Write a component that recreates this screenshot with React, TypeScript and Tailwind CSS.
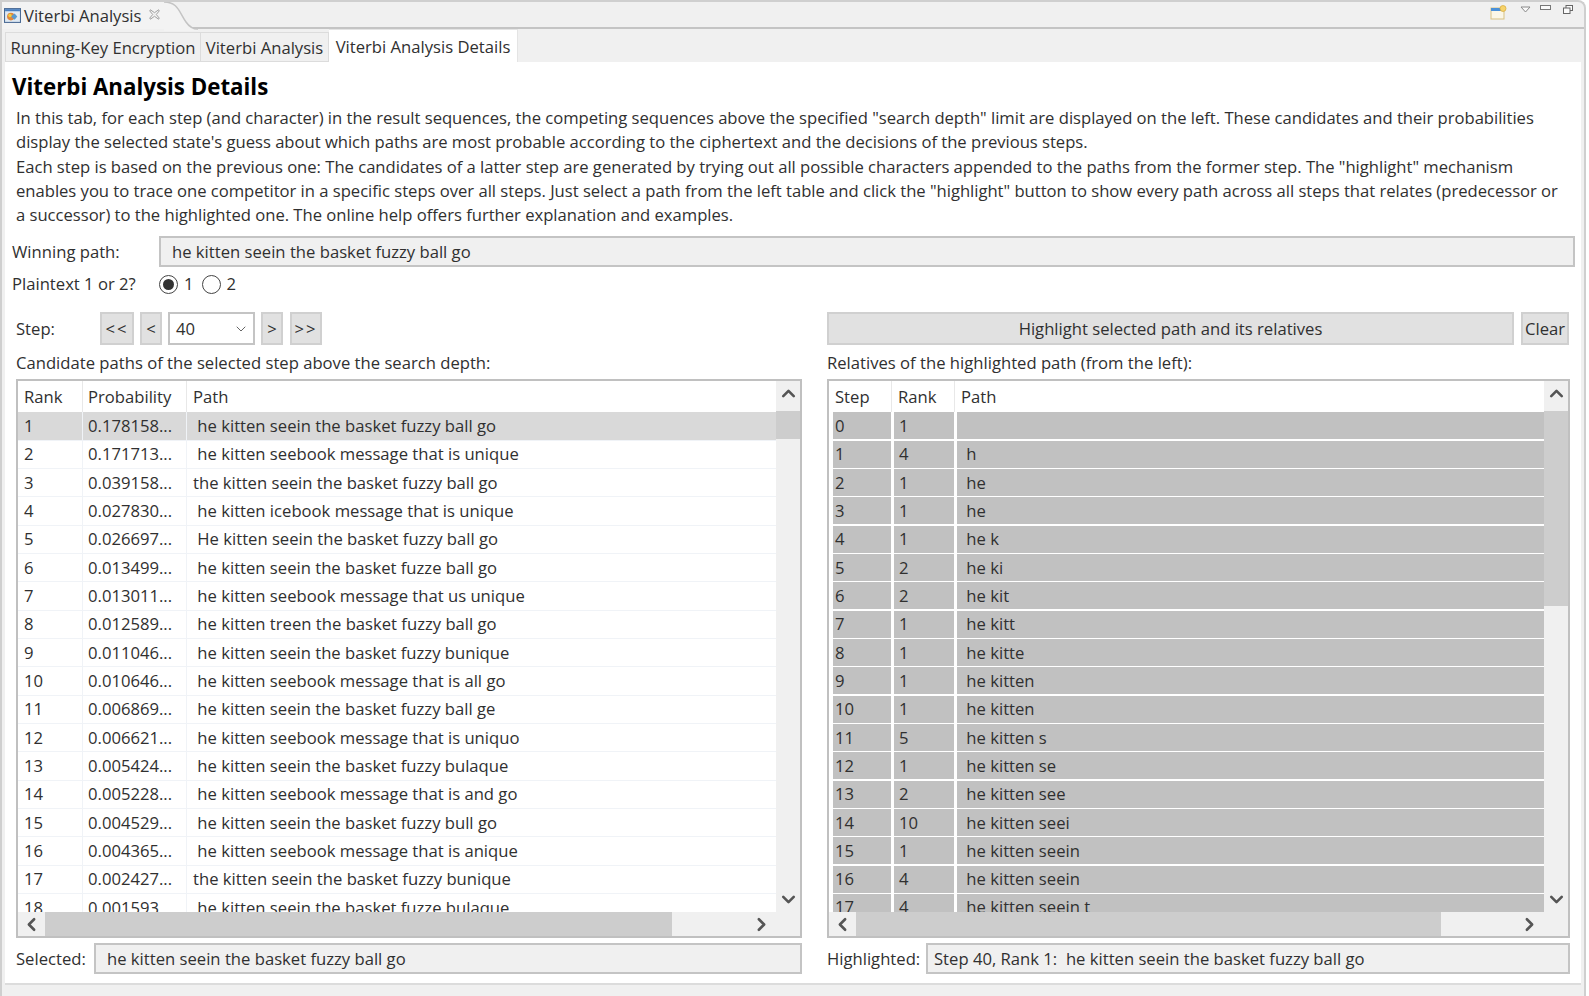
import React from "react";
import { ChevronUp, ChevronDown, ChevronLeft, ChevronRight } from "lucide-react";

const leftRows: [string, string, string][] = [
  ["1", "0.178158...", " he kitten seein the basket fuzzy ball go"],
  ["2", "0.171713...", " he kitten seebook message that is unique"],
  ["3", "0.039158...", "the kitten seein the basket fuzzy ball go"],
  ["4", "0.027830...", " he kitten icebook message that is unique"],
  ["5", "0.026697...", " He kitten seein the basket fuzzy ball go"],
  ["6", "0.013499...", " he kitten seein the basket fuzze ball go"],
  ["7", "0.013011...", " he kitten seebook message that us unique"],
  ["8", "0.012589...", " he kitten treen the basket fuzzy ball go"],
  ["9", "0.011046...", " he kitten seein the basket fuzzy bunique"],
  ["10", "0.010646...", " he kitten seebook message that is all go"],
  ["11", "0.006869...", " he kitten seein the basket fuzzy ball ge"],
  ["12", "0.006621...", " he kitten seebook message that is uniquo"],
  ["13", "0.005424...", " he kitten seein the basket fuzzy bulaque"],
  ["14", "0.005228...", " he kitten seebook message that is and go"],
  ["15", "0.004529...", " he kitten seein the basket fuzzy bull go"],
  ["16", "0.004365...", " he kitten seebook message that is anique"],
  ["17", "0.002427...", "the kitten seein the basket fuzzy bunique"],
  ["18", "0.001593...", " he kitten seein the basket fuzze bulaque"],
];

const rightRows: [string, string, string][] = [
  ["0", "1", ""],
  ["1", "4", " h"],
  ["2", "1", " he"],
  ["3", "1", " he"],
  ["4", "1", " he k"],
  ["5", "2", " he ki"],
  ["6", "2", " he kit"],
  ["7", "1", " he kitt"],
  ["8", "1", " he kitte"],
  ["9", "1", " he kitten"],
  ["10", "1", " he kitten"],
  ["11", "5", " he kitten s"],
  ["12", "1", " he kitten se"],
  ["13", "2", " he kitten see"],
  ["14", "10", " he kitten seei"],
  ["15", "1", " he kitten seein"],
  ["16", "4", " he kitten seein"],
  ["17", "4", " he kitten seein t"],
];

const paragraph = [
  'In this tab, for each step (and character) in the result sequences, the competing sequences above the specified "search depth" limit are displayed on the left. These candidates and their probabilities',
  "display the selected state's guess about which paths are most probable according to the ciphertext and the decisions of the previous steps.",
  'Each step is based on the previous one: The candidates of a latter step are generated by trying out all possible characters appended to the paths from the former step. The "highlight" mechanism',
  'enables you to trace one competitor in a specific steps over all steps. Just select a path from the left table and click the "highlight" button to show every path across all steps that relates (predecessor or',
  "a successor) to the highlighted one. The online help offers further explanation and examples.",
];

function Btn({ children, className }: { children: React.ReactNode; className: string }) {
  return (
    <div className={`flex items-center justify-center h-[33px] pt-[1px] bg-[#e1e1e1] border-2 border-[#d0d0d0] ${className}`}>
      {children}
    </div>
  );
}

function Chev({ Icon }: { Icon: typeof ChevronUp }) {
  return <Icon size={21} strokeWidth={3} className="text-[#555555]" />;
}

function VScroll({ thumb }: { thumb: string }) {
  return (
    <div className="w-[24px] shrink-0 bg-[#f0f0f0] flex flex-col items-center">
      <div className="h-[30px] shrink-0 w-full flex items-center justify-center pb-[5px]">
        <Chev Icon={ChevronUp} />
      </div>
      <div className={`w-full shrink-0 bg-[#cdcdcd] ${thumb}`} />
      <div className="flex-1" />
      <div className="h-[26px] shrink-0 flex items-center justify-center">
        <Chev Icon={ChevronDown} />
      </div>
    </div>
  );
}

function HScroll({ thumb }: { thumb: string }) {
  return (
    <div className="h-[24px] shrink-0 flex items-center bg-[#f0f0f0]">
      <div className="w-[27px] shrink-0 flex items-center justify-center">
        <Chev Icon={ChevronLeft} />
      </div>
      <div className={`h-full shrink-0 bg-[#cdcdcd] ${thumb}`} />
      <div className="flex-1 flex items-center justify-end pr-[28px]">
        <Chev Icon={ChevronRight} />
      </div>
    </div>
  );
}

function Field({ children, className }: { children: React.ReactNode; className: string }) {
  return (
    <div className={`flex items-center whitespace-pre pt-[2px] bg-[#f0f0f0] border-2 border-[#c4c4c4] ${className}`}>{children}</div>
  );
}

export default function App() {
  return (
    <div
      className="w-[1589px] h-[996px] bg-white overflow-hidden text-[#303030] text-[16.65px] whitespace-nowrap"
      style={{ fontFamily: '"Open Sans", "Noto Sans", sans-serif' }}
    >
      <div className="w-[1586px] h-[996px] bg-[#f0f0f0] border-l-2 border-r-2 border-t-2 border-[#cfcfcf] rounded-tr-[8px] flex flex-col">
        {/* view tab bar */}
        <div className="h-[27px] shrink-0 flex border-b-2 border-[#c4c4c4] relative">
          <div className="w-[162px] h-[27px] bg-[#f3f3f3] flex items-center pl-[2px] relative z-10">
            <svg width="17" height="17" viewBox="0 0 16 16" className="shrink-0">
              <rect x="0.5" y="1.5" width="15" height="13" fill="#dfe9f3" stroke="#4a6a94" />
              <rect x="1" y="2" width="14" height="2" fill="#4a7fc0" />
              <circle cx="6.5" cy="9" r="3.6" fill="#e0863c" />
              <path d="M6.5 9 L10 6 L12.5 9 L10 12 Z" fill="#5a9ad0" />
              <circle cx="5.6" cy="8" r="1.6" fill="#f0d040" />
            </svg>
            <span className="ml-[3px] pt-[2px]">Viterbi Analysis</span>
            <svg width="13" height="13" viewBox="0 0 11 11" className="ml-[7px] mb-[3px]">
              <path d="M2 1.5 L5.5 4 L9 1.5 L9.5 2.5 L7 5.5 L9.5 8.5 L9 9.5 L5.5 7 L2 9.5 L1.5 8.5 L4 5.5 L1.5 2.5 Z" fill="#f4f4f4" stroke="#9a9a9a" strokeWidth="0.8" />
            </svg>
          </div>
          <svg width="34" height="29" viewBox="0 0 34 29" className="shrink-0 relative z-10">
            <path d="M0 0 C 14 0, 15 10, 22 20 C 26 26, 30 27, 34 27 L 34 29 L 0 29 Z" fill="#f3f3f3" />
            <path d="M0 0 C 14 0, 15 10, 22 20 C 26 26, 30 27, 34 27" fill="none" stroke="#c4c4c4" strokeWidth="1.5" />
          </svg>
          <div className="flex-1 flex items-start justify-end">
            <svg width="17" height="16" viewBox="0 0 17 16" className="mt-[3px] mr-[13px]">
              <rect x="1" y="3" width="13" height="11" fill="#fbf7e8" stroke="#d7c183" />
              <rect x="1" y="3" width="13" height="3" fill="#4a90d9" />
              <circle cx="13" cy="3.5" r="3" fill="#f7d36b" stroke="#d4a93a" strokeWidth="0.7" />
            </svg>
            <svg width="11" height="7" viewBox="0 0 11 7" className="mt-[4px] mr-[9px]">
              <path d="M1 1 H10 L5.5 6 Z" fill="#fafafa" stroke="#8a8a8a" />
            </svg>
            <svg width="11" height="6" viewBox="0 0 11 6" className="mt-[3px] mr-[12px]">
              <rect x="0.5" y="0.5" width="10" height="4" fill="#fafafa" stroke="#777777" />
            </svg>
            <svg width="10" height="9" viewBox="0 0 10 9" className="mt-[3px] mr-[11px]">
              <rect x="3" y="0.5" width="6.5" height="5" fill="#fafafa" stroke="#666666" />
              <rect x="0.5" y="3" width="6.5" height="5.5" fill="#fafafa" stroke="#666666" />
            </svg>
          </div>
        </div>

        {/* inner tabs */}
        <div className="h-[33px] shrink-0 flex items-end pl-[3px] pr-[2px]">
          <div className="h-[30px] w-[196px] flex items-center justify-center pt-[3px] bg-[#f0f0f0] border border-[#dcdcdc]">Running-Key Encryption</div>
          <div className="h-[30px] w-[128px] flex items-center justify-center pt-[3px] bg-[#f0f0f0] border border-[#dcdcdc] border-l-0">Viterbi Analysis</div>
          <div className="h-[33px] w-[189px] flex items-center justify-center pt-[3px] bg-white border-t border-r border-[#e4e4e4]">Viterbi Analysis Details</div>
        </div>

        {/* tab body */}
        <div className="w-[1576px] ml-[3px] h-[923px] shrink-0 bg-white border-b-2 border-[#dcdcdc] flex flex-col">
          <div className="h-[37px] pt-[8px] pl-[7px] text-[22.3px] leading-[34px] font-bold text-black shrink-0">Viterbi Analysis Details</div>
          <div className="mt-[7px] pl-[11px] leading-[24.3px] tracking-[-0.025px] shrink-0">
            {paragraph.map((line) => (
              <div key={line}>{line}</div>
            ))}
          </div>

          <div className="mt-[9px] h-[31px] flex shrink-0 items-center pl-[7px]">
            <div className="w-[147px] pt-[2px]">Winning path:</div>
            <Field className="w-[1416px] h-[31px] pl-[11px]">he kitten seein the basket fuzzy ball go</Field>
          </div>

          <div className="h-[35px] flex shrink-0 items-center pl-[7px]">
            <div className="w-[147px]">Plaintext 1 or 2?</div>
            <div className="w-[19px] h-[19px] rounded-full border border-[#444444] flex items-center justify-center">
              <div className="w-[11px] h-[11px] rounded-full bg-[#333333]" />
            </div>
            <span className="ml-[6px]">1</span>
            <div className="ml-[8px] w-[19px] h-[19px] rounded-full border border-[#444444]" />
            <span className="ml-[6px]">2</span>
          </div>

          <div className="mt-[10px] h-[33px] flex shrink-0 pl-[11px]">
            <div className="w-[584px] flex">
              <div className="w-[84px] flex items-center pt-[1px]">Step:</div>
              <Btn className="w-[34px] tracking-[2px]">&lt;&lt;</Btn>
              <Btn className="w-[22px] ml-[6px]">&lt;</Btn>
              <div className="w-[87px] ml-[6px] h-[33px] border-2 border-[#c4c4c4] flex items-center justify-between pl-[6px] pr-[4px]">
                <span className="pt-[1px]">40</span>
                <ChevronDown size={16} strokeWidth={1.5} className="text-[#666666]" />
              </div>
              <Btn className="w-[22px] ml-[6px]">&gt;</Btn>
              <Btn className="w-[32px] ml-[7px] tracking-[2px]">&gt;&gt;</Btn>
            </div>
            <div className="ml-[227px] flex">
              <Btn className="w-[687px]">Highlight selected path and its relatives</Btn>
              <Btn className="w-[48px] ml-[7px]">Clear</Btn>
            </div>
          </div>

          <div className="mt-[7px] h-[22px] leading-[22px] flex shrink-0 pl-[11px]">
            <div className="w-[811px]">Candidate paths of the selected step above the search depth:</div>
            <div>Relatives of the highlighted path (from the left):</div>
          </div>

          <div className="mt-[5px] h-[559px] flex shrink-0 pl-[11px]">
            {/* left table */}
            <div className="w-[786px] h-full border-2 border-[#c0c0c0] flex flex-col">
              <div className="h-[531px] flex shrink-0">
                <div className="flex-1 min-w-0 overflow-hidden flex flex-col">
                  <div className="h-[31px] shrink-0 grid grid-cols-[65px_104px_1fr] items-center">
                    <div className="pl-[6px] pt-[2px] h-full flex items-center border-r border-[#e8e8e8]">Rank</div>
                    <div className="pl-[5px] pt-[2px] h-full flex items-center border-r border-[#e8e8e8]">Probability</div>
                    <div className="pl-[6px] pt-[2px]">Path</div>
                  </div>
                  {leftRows.map((r, i) => (
                    <div
                      key={r[0]}
                      className={`h-[28.33px] shrink-0 grid grid-cols-[65px_104px_1fr] items-center border-b border-[#f0f3f7] ${i === 0 ? "bg-[#d9d9d9]" : ""}`}
                    >
                      <div className="pl-[6px] pt-[1px] h-full flex items-center border-r border-[#f0f3f7]">{r[0]}</div>
                      <div className="pl-[5px] pt-[1px] h-full flex items-center border-r border-[#f0f3f7]">{r[1]}</div>
                      <div className="pl-[6px] pt-[1px] whitespace-pre">{r[2]}</div>
                    </div>
                  ))}
                </div>
                <VScroll thumb="h-[28px]" />
              </div>
              <HScroll thumb="w-[627px]" />
            </div>

            {/* right table */}
            <div className="ml-[25px] w-[743px] h-full border-2 border-[#c0c0c0] flex flex-col">
              <div className="h-[531px] flex shrink-0">
                <div className="flex-1 min-w-0 overflow-hidden flex flex-col">
                  <div className="h-[31px] shrink-0 grid grid-cols-[63px_63px_1fr] items-center">
                    <div className="pl-[6px] pt-[2px] h-full flex items-center border-r border-[#e8e8e8]">Step</div>
                    <div className="pl-[6px] pt-[2px] h-full flex items-center border-r border-[#e8e8e8]">Rank</div>
                    <div className="pl-[6px] pt-[2px]">Path</div>
                  </div>
                  {rightRows.map((r) => (
                    <div key={r[0]} className="h-[28.33px] shrink-0 grid grid-cols-[58px_60px_1fr] gap-x-[3px] pl-[4px] pb-[1.5px]">
                      <div className="bg-[#c1c1c1] pl-[2px] pt-[1px] flex items-center">{r[0]}</div>
                      <div className="bg-[#c1c1c1] pl-[5px] pt-[1px] flex items-center">{r[1]}</div>
                      <div className="bg-[#c1c1c1] pl-[5px] pt-[1px] flex items-center whitespace-pre">{r[2]}</div>
                    </div>
                  ))}
                </div>
                <VScroll thumb="h-[195px]" />
              </div>
              <HScroll thumb="w-[585px]" />
            </div>
          </div>

          <div className="mt-[5px] h-[31px] flex shrink-0 pl-[11px]">
            <div className="w-[78px] flex items-center pt-[2px]">Selected:</div>
            <Field className="w-[708px] pl-[11px]">he kitten seein the basket fuzzy ball go</Field>
            <div className="ml-[25px] w-[99px] flex items-center pt-[2px]">Highlighted:</div>
            <Field className="w-[644px] pl-[6px]">Step 40, Rank 1:  he kitten seein the basket fuzzy ball go</Field>
          </div>
        </div>
      </div>
    </div>
  );
}
